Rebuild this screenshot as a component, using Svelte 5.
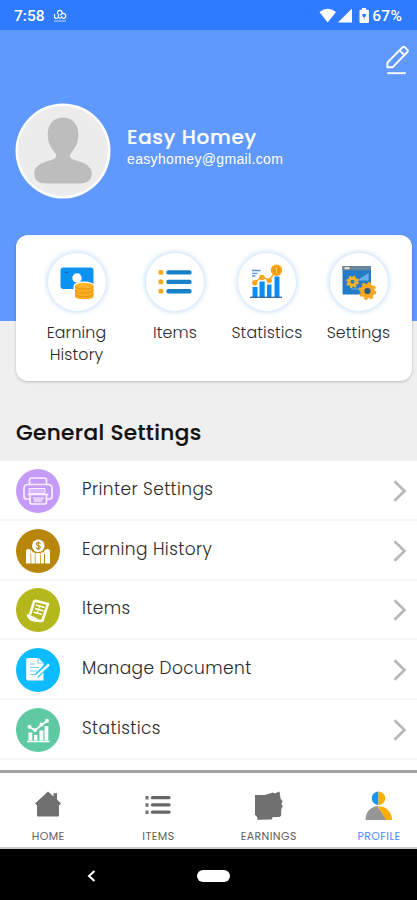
<script>
  const shortcuts = [
    { id: 'earning', label: 'Earning History' },
    { id: 'items', label: 'Items' },
    { id: 'statistics', label: 'Statistics' },
    { id: 'settings', label: 'Settings' }
  ]

  const settings = [
    { id: 'printer', label: 'Printer Settings', color: '#c59bfa' },
    { id: 'earning', label: 'Earning History', color: '#b8860b' },
    { id: 'items', label: 'Items', color: '#b4b81c' },
    { id: 'document', label: 'Manage Document', color: '#0cbcff' },
    { id: 'statistics', label: 'Statistics', color: '#5fcaa2' }
  ]

  const tabs = [
    { id: 'home', label: 'HOME' },
    { id: 'items', label: 'ITEMS' },
    { id: 'earnings', label: 'EARNINGS' },
    { id: 'profile', label: 'PROFILE' }
  ]

  let active = $state('profile')
</script>

<div class="screen">
  <header class="status">
    <span class="status__time">7:58</span>
    <svg class="status__app" width="14" height="14" viewBox="0 0 14 14" fill="none" stroke="#fff" stroke-width="1.2">
      <path d="M1.5 5v2.5a2 2 0 0 0 4 0V5M4.5 5V3.5a2.3 2.3 0 1 1 2.5 2.5M6 9a2.2 2.2 0 0 0 3-2M9.5 4.5a2.5 2.5 0 1 1-.5 4.5" />
      <path d="M1 12h12" stroke-width="1" opacity=".7" />
    </svg>
    <div class="status__right">
      <svg width="50" height="16" viewBox="0 0 50 16" fill="#fff">
        <path d="M.5 4Q8.5-2.500 17 4L8.700 14.400z" />
        <path d="M33 .5V14.500H19z" />
        <path d="M43 0h4v1.700h2a.9.9 0 0 1 .9.9V14a.9.9 0 0 1-.9.9h-7.600a.9.9 0 0 1-.9-.9V2.600a.9.9 0 0 1 .9-.9H43z" />
        <path d="M43 6h4.500l-1.300 3h-.5l-.5 3-.5-3h-.7z" fill="#2f7bff" />
      </svg>
      <span>67%</span>
    </div>
  </header>

  <section class="hero">
    <button class="hero__edit" aria-label="Edit profile">
      <svg width="26" height="30" viewBox="0 0 26 30" fill="none" stroke="#fff" stroke-width="1.9" stroke-linejoin="round">
        <path d="M2.500 17.500 17.600 2.200a1.500 1.500 0 0 1 2.100 0l2.700 2.700a1.500 1.500 0 0 1 0 2.100L7.500 22.300H2.300zM14.500 5.300l4.900 4.900" />
        <path d="M2.300 28.200h18.500" />
      </svg>
    </button>
    <div class="profile">
      <svg class="profile__avatar" width="96" height="96" viewBox="0 0 96 96">
        <circle cx="48" cy="48" r="47.500" fill="#fdfefe" />
        <circle cx="48" cy="48" r="45" fill="#ececec" />
        <path d="M48 14.500c-9 0-15.300 6.500-15.300 16.500 0 9.500 3.500 14 7 18.500 2.400 3 1.800 5.300-1.400 6.700-6.500 2.600-19 4.300-19 14.300 0 7 5 10 12 10h33.500c7 0 12-3 12-10 0-10-12.500-11.700-19-14.300-3.200-1.400-3.800-3.700-1.400-6.700 3.500-4.500 7-9 7-18.500 0-10-6.400-16.500-15.400-16.500z" fill="#bdbdbd" />
      </svg>
      <div class="profile__info">
        <h1>Easy Homey</h1>
        <p>easyhomey@gmail.com</p>
      </div>
    </div>
  </section>

  <nav class="shortcuts">
    {#each shortcuts as item}
      <div class="shortcut">
        <div class="shortcut__icon">
          {#if item.id === 'earning'}
            <svg width="36" height="36" viewBox="0 0 36 36">
              <rect x="1.500" y="3.500" width="33" height="21.500" rx="3" fill="#0c93f2" />
              <circle cx="18" cy="14" r="4.700" fill="#fff" />
              <path d="M5.500 8.500h4" stroke="#0762c9" stroke-width="1.300" />
              <path d="M14.500 22c0-6 21-6 21 0v14h-21z" fill="#fff" />
              <path d="M16 22v10.500c0 3.700 18.500 3.700 18.500 0V22z" fill="#f9ae20" />
              <ellipse cx="25.250" cy="21.700" rx="9.250" ry="3" fill="#ffb42a" />
              <path d="M16 22c0 4 18.500 4 18.500 0M16 26c0 4 18.500 4 18.500 0M16 29.700c0 4 18.500 4 18.500 0" fill="none" stroke="#e3930f" stroke-width=".9" />
            </svg>
          {:else if item.id === 'items'}
            <svg width="36" height="36" viewBox="0 0 36 36">
              <g fill="#f9a91e">
                <rect x="1.500" y="6" width="4.800" height="4.800" rx="1.500" />
                <rect x="1.500" y="15.500" width="4.800" height="4.800" rx="1.500" />
                <rect x="1.500" y="24.800" width="4.800" height="4.800" rx="1.500" />
              </g>
              <path d="M11.500 8.400h21M11.500 17.900h21M11.500 27.200h21" stroke="#1781c8" stroke-width="4.400" stroke-linecap="round" />
            </svg>
          {:else if item.id === 'statistics'}
            <svg width="36" height="36" viewBox="0 0 36 36">
              <path d="M3.500 23h5v10h-5zM10.500 17.500h5.200V33h-5.200zM18 20.500h4.500V33H18zM25.500 12.500h5V33h-5z" fill="#0e8cf0" />
              <path d="M1 33.300h32" stroke="#245f9e" stroke-width="1.200" />
              <path d="m6 18 7-5 7 3 6-7" stroke="#f4a21c" stroke-width="1.400" fill="none" />
              <g fill="#faa51b">
                <circle cx="5.800" cy="18.800" r="2.700" />
                <circle cx="13" cy="13.500" r="2.800" />
                <circle cx="20.300" cy="16.500" r="2.600" />
                <circle cx="27.500" cy="6.300" r="5.700" />
              </g>
              <circle cx="27.500" cy="6.300" r="3.500" fill="#e99309" />
              <path d="M27.500 3.300v6M26 4.800h2.500" stroke="#ffd158" stroke-width="1.200" />
              <path d="M3 6.500h8.500M3 9.300h5.500M3 12h3.500" stroke="#5b93d8" stroke-width="1.300" />
            </svg>
          {:else}
            <svg width="36" height="36" viewBox="0 0 36 36">
              <path d="M1.500 2H30v28.500H1.500z" fill="#237cc7" />
              <path d="M1.500 2H30v4.300H1.500z" fill="#66849c" />
              <path d="M3.500 4.200h5" stroke="#f0dfc2" stroke-width="2.200" />
              <path d="m18 16 9-6v6zM10 25h9" fill="#62adee" stroke="#72b3e9" stroke-width="1.200" />
              <circle cx="11.500" cy="17.800" r="3.500" fill="none" stroke="#f8b12b" stroke-width="3" />
              <circle cx="11.500" cy="17.800" r="5.300" fill="none" stroke="#f8b12b" stroke-width="2" stroke-dasharray="2.360 1.800" />
              <circle cx="26.500" cy="27" r="5.100" fill="none" stroke="#fba821" stroke-width="4.500" />
              <circle cx="26.500" cy="27" r="7.700" fill="none" stroke="#fba821" stroke-width="2.400" stroke-dasharray="3.400 2.648" />
              <circle cx="26.500" cy="27" r="3" fill="#315878" />
            </svg>
          {/if}
        </div>
        <span class="shortcut__label">{item.label}</span>
      </div>
    {/each}
  </nav>

  <main>
    <h2>General Settings</h2>
    <ul class="list">
      {#each settings as row}
        <li class="row">
          <span class="row__icon" style:background={row.color}>
            <svg width="44" height="44" viewBox="0 0 44 44" fill="none" stroke="#fff" stroke-linejoin="round">
              {#if row.id === 'printer'}
                <g stroke="#fbefff" stroke-width="1.700">
                  <path d="M13.500 15.500v-4.500a2 2 0 0 1 2-2h13a2 2 0 0 1 2 2v4.500" />
                  <path d="M13.500 30H10.500a2.500 2.500 0 0 1-2.500-2.500V19a3.500 3.500 0 0 1 3.500-3.500h21A3.500 3.500 0 0 1 36 19v8.500a2.500 2.500 0 0 1-2.500 2.500H30.500" />
                  <path d="M14 25.500h16.500v7.500a2 2 0 0 1-2 2H16a2 2 0 0 1-2-2zM11.500 25.500h21" />
                  <path d="M13 19.500h16v5H13z" fill="#fbefff" fill-opacity=".35" stroke-width="1" />
                  <path d="M17 29.500h11M18 32h8" stroke-width="2.500" opacity=".65" />
                </g>
              {:else if row.id === 'earning'}
                <g fill="#fff" stroke="none">
                  <path d="M10 22q0-2 2.300-2t2.300 2v12.500H10zM15.300 23.500h3.500v11h-3.500zM19.500 24h4.500v10.500h-4.500zM24.700 23.500h3.200v11h-3.200zM29 22q0-2 2.500-2t2.500 2v12.500h-5z" />
                  <circle cx="22.300" cy="16.800" r="6.300" />
                  <path d="M14.500 20q4 6 8 6t7-6v5h-15z" />
                </g>
                <path d="M24.500 14.500c-2-2-5-.6-4 1.200.8 1.300 3.500.8 3.800 2.400.3 1.700-2.800 2.200-4.300.5M22.300 12.500v8.600" stroke="#b8860b" stroke-width="1.100" />
              {:else if row.id === 'items'}
                <path d="M18.500 12.500l13.500 3.500-5.500 16.500q-4 1.500-7-1.500l-7.500-3.500c1.500 5 7 6 14 5M18.500 12.500l-4.500 14" stroke-width="2.500" />
                <path d="m20 17 8.500 2.500M19 20.500l8.500 2.500M17.500 24l8.500 2.500" stroke-width="1.800" />
                <path d="m24 17-3 9" stroke-width="1" />
              {:else if row.id === 'document'}
                <path d="M12 10h10.500l5 5v17.500h-15.500a1.800 1.800 0 0 1-1.800-1.800V11.800A1.800 1.800 0 0 1 12 10z" fill="#fff" stroke="none" />
                <path d="M22 10v5h5.500M14 16h5M14 19.500h9M14 23h7M14 26.500h5" stroke="#6dd5fa" stroke-width="1.200" />
                <path d="m20.500 28 12-12" stroke="#0cbcff" stroke-width="5" />
                <path d="m20.500 28 12.500-11.500" stroke-width="2.400" />
                <path d="m18.500 29.500 1.300-3 2 2z" fill="#fff" stroke="none" />
              {:else}
                <path d="M12.500 24.500h3.800v8h-3.800zM18 27h3.500v5.500H18zM23.500 22.500h3.800v10h-3.800zM28.500 18h3.800v14.500h-3.800z" fill="#fff" stroke="none" />
                <path d="M11 33.500h22.500M13.500 19l5.500 3.500 7-6 5-3.500" stroke-width="1.700" />
                <g fill="#fff" stroke="none">
                  <circle cx="13.500" cy="18.700" r="2" />
                  <circle cx="19" cy="22" r="2" />
                  <circle cx="25.500" cy="16.500" r="2" />
                  <circle cx="31" cy="12.800" r="2" />
                </g>
              {/if}
            </svg>
          </span>
          <span class="row__label">{row.label}</span>
          <svg class="row__arrow" width="14" height="22" viewBox="0 0 14 22" fill="none" stroke="#b8b8b8" stroke-width="2.700">
            <path d="m1.500 1.200 10 9.800-10 9.800" />
          </svg>
        </li>
      {/each}
    </ul>
  </main>

  <footer class="tabs">
    {#each tabs as tab}
      <button class="tab" class:tab--active={active === tab.id} onclick={() => (active = tab.id)}>
        <svg width="32" height="32" viewBox="0 0 32 32" fill="#707070">
          {#if tab.id === 'home'}
            <path d="M3 13.500 16 1.500l5.500 5V3.200h3.500v6.300l4 4-1.500 1.500H27v10.500q0 1-1 1H6q-1 0-1-1V15H4.500z" />
          {:else if tab.id === 'items'}
            <path d="M3.500 6H6.500v3.500H3.500zM3.500 13.200H6.500v3.500H3.500zM3.500 20.500H6.500V24H3.500z" />
            <path d="M10.500 7.700h16.500M10.500 14.900h16.500M10.500 22.200h16.500" stroke="#666" stroke-width="3.300" stroke-linecap="round" />
          {:else if tab.id === 'earnings'}
            <path d="M2 5h9.500l3.500-1 5-1.500 1.500 1 5-2 .5 3.500.7 4 2 2-1.300 2.500 1.300 3-1.500 3v6L26.700 27h-7l-1 2.500-14.200.3-.5-3-2-2V6.500z" />
          {:else}
            <path d="M15.500 1.500a6.700 6.700 0 0 0 0 13.400z" fill="#1599ee" />
            <path d="M15.500 1.500a6.700 6.700 0 0 1 0 13.400z" fill="#ffad00" />
            <path d="M2.500 30c0-8 5-13.500 12-13.800L24 30z" fill="#969696" />
            <path d="M14.500 16.200C23.500 16 29 22 29 30h-5.700z" fill="#ffad00" />
          {/if}
        </svg>
        <span>{tab.label}</span>
      </button>
    {/each}
  </footer>

  <div class="system">
    <svg width="9" height="12" viewBox="0 0 9 12" fill="none" stroke="#fff" stroke-width="2"><path d="M7.500 1 2 6l5.500 5" /></svg>
    <span class="system__pill"></span>
  </div>
</div>

<style>
  :global(body) {
    background: #efefef;
  }

  .screen {
    display: flex;
    flex-direction: column;
    height: 900px;
    overflow: hidden;
    background: #efefef;
    font-family: Poppins, Inter, 'Open Sans', sans-serif;
    color: #2a2a2a;
  }

  button {
    padding: 0;
    border: 0;
    background: none;
    font: inherit;
  }

  .status {
    display: flex;
    align-items: center;
    flex: none;
    height: 30px;
    box-sizing: border-box;
    padding: 1px 15px 0 14px;
    background: #2f7bff;
    color: #fff;
    font-family: Roboto, sans-serif;
    font-size: 15.5px;
    font-weight: 500;
  }

  .status__app {
    margin-left: 8px;
  }

  .status__right {
    display: flex;
    align-items: center;
    gap: 3px;
    margin-left: auto;
    letter-spacing: 0.2px;
  }

  .hero {
    flex: none;
    height: 291px;
    background: #5f99fd;
  }

  .hero__edit {
    display: block;
    margin: 15px 6px 0 auto;
    height: 30px;
  }

  .profile {
    display: flex;
    align-items: center;
    gap: 16px;
    margin: 28px 0 0 15px;
    color: #fff;
  }

  .profile__info {
    padding-bottom: 10px;
  }

  h1 {
    margin: 0;
    font-size: 20px;
    font-weight: 500;
    line-height: 26px;
    letter-spacing: 0.65px;
    -webkit-text-stroke: 0.2px;
  }

  .profile p {
    margin: 0;
    font-family: 'Liberation Sans', Arial, sans-serif;
    font-size: 14px;
    line-height: 19px;
    letter-spacing: 0.35px;
  }

  .shortcuts {
    display: grid;
    flex: none;
    grid-template-columns: 99px 98px 86px 97px;
    height: 146px;
    box-sizing: border-box;
    margin: -86px 5px 0 16px;
    padding: 18px 0 0 11px;
    border-radius: 12px;
    background: #fff;
    box-shadow: 0 1px 3px rgba(0, 0, 0, 0.22);
  }

  .shortcut {
    display: flex;
    flex-direction: column;
    align-items: center;
  }

  .shortcut__icon {
    display: flex;
    align-items: center;
    justify-content: center;
    width: 58px;
    height: 58px;
    border-radius: 50%;
    background: #fff;
    box-shadow: 0 0 4px 2px #d3e7fb;
  }

  .shortcut__label {
    max-width: 75px;
    margin-top: 11px;
    font-size: 15.8px;
    font-weight: 300;
    line-height: 22px;
    letter-spacing: 0.15px;
    text-align: center;
  }

  h2 {
    margin: 37px 0 0 16px;
    color: #111;
    font-size: 21.6px;
    font-weight: 500;
    line-height: 30px;
    letter-spacing: 0.35px;
    -webkit-text-stroke: 0.2px;
  }

  .list {
    height: 309px;
    margin: 13px 0 0;
    padding: 0;
    background: #fff;
    list-style: none;
  }

  .row {
    display: flex;
    align-items: center;
    height: 59.8px;
    box-sizing: border-box;
    padding: 0 10px 0 16px;
    border-bottom: 2px solid #f6f6f6;
  }

  .row__icon {
    display: flex;
    width: 44px;
    height: 44px;
    margin-top: 2px;
    border-radius: 50%;
  }

  .row__label {
    margin: -2px auto 0 22px;
    font-size: 17px;
    font-weight: 300;
    letter-spacing: 0.4px;
  }

  .row__arrow {
    margin-top: 2px;
  }

  .tabs {
    display: grid;
    flex: none;
    grid-template-columns: repeat(4, 110.3px);
    height: 79px;
    box-sizing: border-box;
    margin-left: -7px;
    margin-right: -17px;
    padding-top: 17px;
    border-top: 3px solid #a3a3a3;
    border-bottom: 2px solid #ccc;
    background: #fff;
  }

  .tab {
    display: flex;
    flex-direction: column;
    align-items: center;
    color: #606060;
    font-size: 11px;
    line-height: 16px;
    letter-spacing: 0.4px;
  }

  .tab span {
    margin-top: 6px;
  }

  .tab--active {
    color: #4f8bff;
  }

  .system {
    display: flex;
    align-items: center;
    flex: 1;
    gap: 101px;
    padding: 2px 0 0 87px;
    background: #000;
  }

  .system__pill {
    width: 33px;
    height: 12px;
    border-radius: 6px;
    background: #fff;
  }
</style>
